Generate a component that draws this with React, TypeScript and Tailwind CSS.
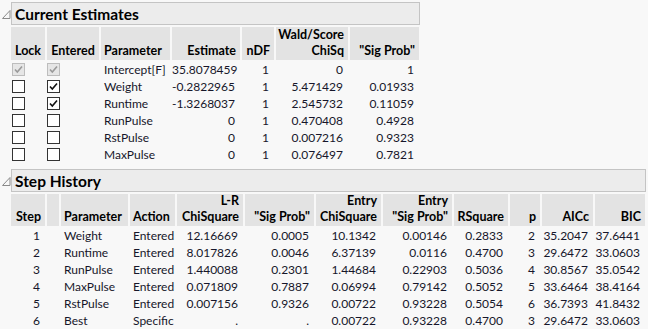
import React from "react";

type Align = "l" | "r" | "c";

const estCols = "grid-cols-[34px_52px_69px_68px_32px_72px_69px]";
const stepCols = "grid-cols-[34px_12px_67px_45px_66px_69px_65px_69px_54px_30px_51px_50px]";

const estimates = [
    { lock: "dis", entered: "dis", name: "Intercept[F]", est: "35.8078459", ndf: "1", chi: "0", p: "1" },
    { lock: "off", entered: "on", name: "Weight", est: "-0.2822965", ndf: "1", chi: "5.471429", p: "0.01933" },
    { lock: "off", entered: "on", name: "Runtime", est: "-1.3268037", ndf: "1", chi: "2.545732", p: "0.11059" },
    { lock: "off", entered: "off", name: "RunPulse", est: "0", ndf: "1", chi: "0.470408", p: "0.4928" },
    { lock: "off", entered: "off", name: "RstPulse", est: "0", ndf: "1", chi: "0.007216", p: "0.9323" },
    { lock: "off", entered: "off", name: "MaxPulse", est: "0", ndf: "1", chi: "0.076497", p: "0.7821" },
];

const steps = [
    ["1", "Weight", "Entered", "12.16669", "0.0005", "10.1342", "0.00146", "0.2833", "2", "35.2047", "37.6441"],
    ["2", "Runtime", "Entered", "8.017826", "0.0046", "6.37139", "0.0116", "0.4700", "3", "29.6472", "33.0603"],
    ["3", "RunPulse", "Entered", "1.440088", "0.2301", "1.44684", "0.22903", "0.5036", "4", "30.8567", "35.0542"],
    ["4", "MaxPulse", "Entered", "0.071809", "0.7887", "0.06994", "0.79142", "0.5052", "5", "33.6464", "38.4164"],
    ["5", "RstPulse", "Entered", "0.007156", "0.9326", "0.00722", "0.93228", "0.5054", "6", "36.7393", "41.8432"],
    ["6", "Best", "Specific", ".", ".", "0.00722", "0.93228", "0.4700", "3", "29.6472", "33.0603"],
];

const Disclosure = () => (
    <svg width="9" height="23" viewBox="0 0 9 23" className="shrink-0">
        <path d="M8 8.5 L8 16.5 L0.5 16.5 Z" fill="none" stroke="#8a8a8a" strokeWidth="1" />
    </svg>
);

const OutlineTitle = ({ title, wide }: { title: string; wide?: boolean }) => (
    <div className="flex pl-[2px]">
        <Disclosure />
        <div className={`${wide ? "w-[635px]" : "w-[409px]"} h-[23px] border border-[#c4c4c4] bg-[#ececec] flex items-center pl-[3px] text-[15.5px] leading-[20px] font-bold text-black`}>
            {title}
        </div>
    </div>
);

const Head = ({ lines, align = "r", tall = true }: { lines: string[]; align?: Align; tall?: boolean }) => (
    <div
        className={`bg-[#e3e3e3] ${tall ? "h-[33px]" : "h-[32px]"} flex flex-col justify-end text-[12.5px] leading-[16px] font-bold text-black pb-[1px] ${
            align === "r" ? "items-end pr-[4px]" : align === "c" ? "items-center" : "items-start pl-[3px]"
        }`}
    >
        {lines.map((l) => (
            <span key={l} className="whitespace-nowrap">{l}</span>
        ))}
    </div>
);

const Cell = ({ children, align = "r" }: { children: React.ReactNode; align?: Align }) => (
    <div
        className={`h-[17px] leading-[17px] text-[12px] whitespace-nowrap text-[#16162a] ${
            align === "r" ? "text-right pr-[5px]" : align === "c" ? "text-center" : "text-left pl-[3px]"
        }`}
    >
        {children}
    </div>
);

const Check = ({ state }: { state: string }) => {
    const dis = state === "dis";
    return (
        <div
            className={`w-[13px] h-[13px] border flex items-center justify-center ${
                dis ? "border-[#bdbdbd] bg-[#e6e6e6]" : "border-[#333333] bg-white"
            }`}
        >
            {state !== "off" && (
                <svg width="11" height="11" viewBox="0 0 11 11">
                    <path d="M2 5.5 L4.3 8 L9 2.5" fill="none" stroke={dis ? "#9a9a9a" : "#111111"} strokeWidth="1.6" />
                </svg>
            )}
        </div>
    );
};

export default function App() {
    return (
        <div className="w-[648px] h-[329px] overflow-hidden bg-[#f8f8f8] font-['Lato','Noto_Sans',sans-serif] text-[12px] pt-[2px]">
            <OutlineTitle title="Current Estimates" />
            <div className={`ml-[11px] mt-[2px] grid ${estCols} gap-x-[2px]`}>
                <Head lines={["Lock"]} align="c" />
                <Head lines={["Entered"]} align="c" />
                <Head lines={["Parameter"]} align="l" />
                <Head lines={["Estimate"]} />
                <Head lines={["nDF"]} />
                <Head lines={["Wald/Score", "ChiSq"]} />
                <Head lines={['"Sig Prob"']} />
            </div>
            <div className={`ml-[11px] mt-[1px] grid ${estCols} gap-x-[2px]`}>
                {estimates.map((r) => (
                    <React.Fragment key={r.name}>
                        <div className="h-[17px] flex items-center pl-[1px]"><Check state={r.lock} /></div>
                        <div className="h-[17px] flex items-center"><Check state={r.entered} /></div>
                        <Cell align="l">{r.name}</Cell>
                        <Cell>{r.est}</Cell>
                        <Cell>{r.ndf}</Cell>
                        <Cell>{r.chi}</Cell>
                        <Cell>{r.p}</Cell>
                    </React.Fragment>
                ))}
            </div>

            <div className="mt-[6px]">
                <OutlineTitle title="Step History" wide />
            </div>
            <div className={`ml-[11px] mt-[2px] grid ${stepCols} gap-x-[2px]`}>
                <Head tall={false} lines={["Step"]} />
                <Head tall={false} lines={[]} />
                <Head tall={false} lines={["Parameter"]} align="l" />
                <Head tall={false} lines={["Action"]} align="l" />
                <Head tall={false} lines={["L-R", "ChiSquare"]} />
                <Head tall={false} lines={['"Sig Prob"']} />
                <Head tall={false} lines={["Entry", "ChiSquare"]} />
                <Head tall={false} lines={["Entry", '"Sig Prob"']} />
                <Head tall={false} lines={["RSquare"]} />
                <Head tall={false} lines={["p"]} />
                <Head tall={false} lines={["AICc"]} />
                <Head tall={false} lines={["BIC"]} />
            </div>
            <div className={`ml-[11px] mt-[1px] grid ${stepCols} gap-x-[2px]`}>
                {steps.map((r) => (
                    <React.Fragment key={r[0]}>
                        <Cell>{r[0]}</Cell>
                        <Cell>{""}</Cell>
                        <Cell align="l">{r[1]}</Cell>
                        <Cell align="l">{r[2]}</Cell>
                        {r.slice(3).map((v, i) => (
                            <Cell key={i}>{v}</Cell>
                        ))}
                    </React.Fragment>
                ))}
            </div>
        </div>
    );
}
